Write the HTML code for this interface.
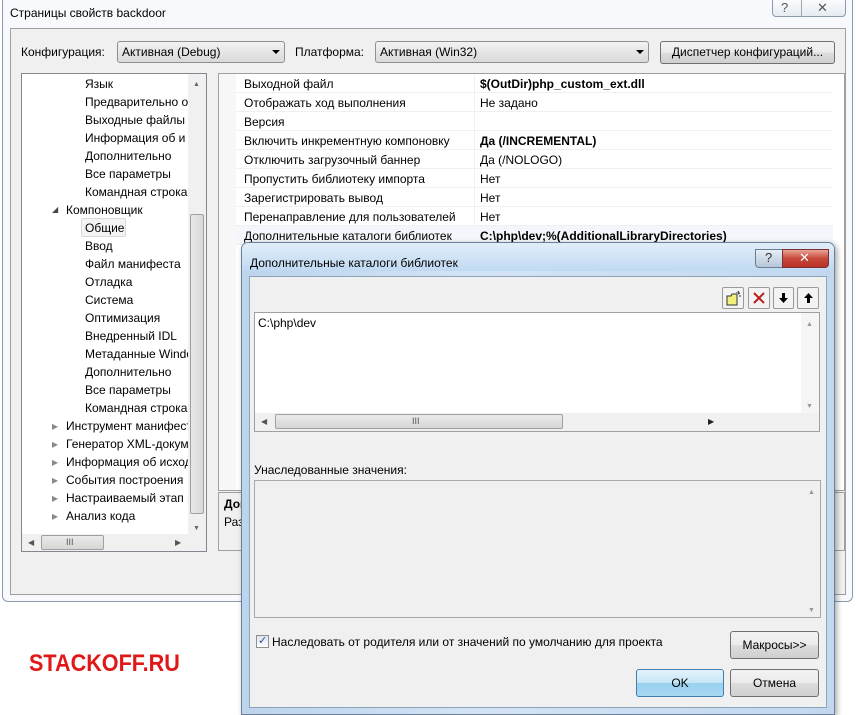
<!DOCTYPE html>
<html><head><meta charset="utf-8">
<style>
*{box-sizing:border-box;margin:0;padding:0}
body{width:856px;height:715px;background:#fff;position:relative;overflow:hidden;font-family:"Liberation Sans","DejaVu Sans",sans-serif;font-size:12px;color:#000}
.a{position:absolute}
.t{position:absolute;white-space:nowrap;line-height:14px}
.btn{position:absolute;border:1px solid #707070;border-radius:3px;background:linear-gradient(#f2f2f2 0%,#ebebeb 50%,#dddddd 51%,#cfcfcf 100%);text-align:center;font-size:12px}
.combo{position:absolute;border:1px solid #8e8f8f;border-radius:3px;background:linear-gradient(#f2f2f2,#e6e6e6 50%,#d9d9d9);}
.arrow{position:absolute;width:0;height:0;border-left:4px solid transparent;border-right:4px solid transparent;border-top:4px solid #000}
.row{position:absolute;left:236px;width:597px;height:19px;border-bottom:1px solid #f0f0f0}
</style></head><body>
<div class="a" style="left:2px;top:0;width:851px;height:602px;background:#f7f9fc;border:1px solid #8a9bb0;border-top:none;border-radius:0 0 6px 6px"></div>
<div class="t" style="left:10px;top:6px;font-size:12px">Страницы свойств backdoor</div>
<div class="a" style="left:772px;top:0;width:74px;height:17px;border:1px solid #8a9bb0;border-top:none;border-radius:0 0 4px 4px;background:linear-gradient(#fbfcfd,#e6ebf1)"></div>
<div class="a" style="left:801px;top:0;width:1px;height:17px;background:#9aa8b8"></div>
<div class="t" style="left:781px;top:1px;color:#555;font-size:13px">?</div>
<div class="t" style="left:817px;top:1px;color:#555;font-size:13px">✕</div>
<div class="a" style="left:10px;top:28px;width:836px;height:567px;background:#f0f0f0;border:1px solid #a0a0a0"></div>

<div class="t" style="left:21px;top:45px">Конфигурация:</div>
<div class="combo" style="left:117px;top:41px;width:168px;height:22px"></div>
<div class="t" style="left:122px;top:45px">Активная (Debug)</div>
<div class="arrow" style="left:272px;top:50px"></div>
<div class="t" style="left:295px;top:45px">Платформа:</div>
<div class="combo" style="left:375px;top:41px;width:274px;height:22px"></div>
<div class="t" style="left:380px;top:45px">Активная (Win32)</div>
<div class="arrow" style="left:636px;top:50px"></div>
<div class="btn" style="left:660px;top:41px;width:175px;height:23px;line-height:21px">Диспетчер конфигураций...</div>

<div class="a" style="left:21px;top:73px;width:186px;height:479px;background:#fff;border:1px solid #828790"></div>
<div class="a" style="left:22px;top:74px;width:166px;height:460px;overflow:hidden">
 <div class="t" style="left:63px;top:3px">Язык</div>
 <div class="t" style="left:63px;top:21px">Предварительно о</div>
 <div class="t" style="left:63px;top:39px">Выходные файлы</div>
 <div class="t" style="left:63px;top:57px">Информация об и</div>
 <div class="t" style="left:63px;top:75px">Дополнительно</div>
 <div class="t" style="left:63px;top:93px">Все параметры</div>
 <div class="t" style="left:63px;top:111px">Командная строка</div>
 <div class="t" style="left:30px;top:129px;font-size:8px;color:#444">◢</div>
 <div class="t" style="left:44px;top:129px">Компоновщик</div>
 <div class="a" style="left:59px;top:144px;width:45px;height:19px;border:1px solid #d9d9d9;border-radius:2px;background:#f3f3f3"></div>
 <div class="t" style="left:63px;top:147px">Общие</div>
 <div class="t" style="left:63px;top:165px">Ввод</div>
 <div class="t" style="left:63px;top:183px">Файл манифеста</div>
 <div class="t" style="left:63px;top:201px">Отладка</div>
 <div class="t" style="left:63px;top:219px">Система</div>
 <div class="t" style="left:63px;top:237px">Оптимизация</div>
 <div class="t" style="left:63px;top:255px">Внедренный IDL</div>
 <div class="t" style="left:63px;top:273px">Метаданные Windo</div>
 <div class="t" style="left:63px;top:291px">Дополнительно</div>
 <div class="t" style="left:63px;top:309px">Все параметры</div>
 <div class="t" style="left:63px;top:327px">Командная строка</div>
 <div class="t" style="left:30px;top:345px;color:#888">▸</div><div class="t" style="left:44px;top:345px">Инструмент манифест</div>
 <div class="t" style="left:30px;top:363px;color:#888">▸</div><div class="t" style="left:44px;top:363px">Генератор XML-докум</div>
 <div class="t" style="left:30px;top:381px;color:#888">▸</div><div class="t" style="left:44px;top:381px">Информация об исход</div>
 <div class="t" style="left:30px;top:399px;color:#888">▸</div><div class="t" style="left:44px;top:399px">События построения</div>
 <div class="t" style="left:30px;top:417px;color:#888">▸</div><div class="t" style="left:44px;top:417px">Настраиваемый этап п</div>
 <div class="t" style="left:30px;top:435px;color:#888">▸</div><div class="t" style="left:44px;top:435px">Анализ кода</div>
</div>
<div class="a" style="left:188px;top:74px;width:18px;height:460px;background:#f0f0f0"></div>
<div class="t" style="left:193px;top:78px;font-size:7px;color:#666">▲</div>
<div class="t" style="left:193px;top:522px;font-size:7px;color:#666">▼</div>
<div class="a" style="left:190px;top:214px;width:14px;height:300px;border:1px solid #a0a0a0;border-radius:2px;background:linear-gradient(90deg,#e8e8e8,#d8d8d8)"></div>
<div class="a" style="left:22px;top:534px;width:184px;height:17px;background:#f0f0f0"></div>
<div class="t" style="left:28px;top:536px;font-size:8px;color:#555">◀</div>
<div class="t" style="left:175px;top:536px;font-size:8px;color:#555">▶</div>
<div class="a" style="left:41px;top:535px;width:63px;height:15px;border:1px solid #a0a0a0;border-radius:2px;background:linear-gradient(#eaeaea,#d6d6d6)"></div>
<div class="t" style="left:66px;top:535px;font-size:9px;color:#555">III</div>

<div class="a" style="left:218px;top:73px;width:627px;height:418px;background:#fff;border:1px solid #a0a0a0"></div>
<div class="a" style="left:219px;top:74px;width:17px;height:416px;background:#f7f7f7"></div>
<div class="a" style="left:474px;top:74px;width:1px;height:170px;background:#f0f0f0"></div>
<div class="row" style="top:74px"></div><div class="t" style="left:244px;top:77px">Выходной файл</div><div class="t" style="left:480px;top:77px;font-weight:bold">$(OutDir)php_custom_ext.dll</div>
<div class="row" style="top:93px"></div><div class="t" style="left:244px;top:96px">Отображать ход выполнения</div><div class="t" style="left:480px;top:96px">Не задано</div>
<div class="row" style="top:112px"></div><div class="t" style="left:244px;top:115px">Версия</div>
<div class="row" style="top:131px"></div><div class="t" style="left:244px;top:134px">Включить инкрементную компоновку</div><div class="t" style="left:480px;top:134px;font-weight:bold">Да (/INCREMENTAL)</div>
<div class="row" style="top:150px"></div><div class="t" style="left:244px;top:153px">Отключить загрузочный баннер</div><div class="t" style="left:480px;top:153px">Да (/NOLOGO)</div>
<div class="row" style="top:169px"></div><div class="t" style="left:244px;top:172px">Пропустить библиотеку импорта</div><div class="t" style="left:480px;top:172px">Нет</div>
<div class="row" style="top:188px"></div><div class="t" style="left:244px;top:191px">Зарегистрировать вывод</div><div class="t" style="left:480px;top:191px">Нет</div>
<div class="row" style="top:207px"></div><div class="t" style="left:244px;top:210px">Перенаправление для пользователей</div><div class="t" style="left:480px;top:210px">Нет</div>
<div class="row" style="top:226px;background:#f3f6fa"></div><div class="t" style="left:244px;top:229px">Дополнительные каталоги библиотек</div><div class="t" style="left:480px;top:229px;font-weight:bold">C:\php\dev;%(AdditionalLibraryDirectories)</div>
<div class="a" style="left:218px;top:492px;width:627px;height:59px;border:1px solid #a0a0a0;background:#f0f0f0"></div>
<div class="t" style="left:224px;top:497px;font-weight:bold">Дополнительные</div>
<div class="t" style="left:224px;top:515px">Разделенный</div>

<div class="t" style="left:29px;top:650px;font-size:24px;line-height:28px;font-weight:bold;color:#e01818;transform:scaleX(0.9);transform-origin:left">STACKOFF.RU</div>

<div class="a" style="left:241px;top:242px;width:594px;height:473px;border:1px solid #6b7f96;border-radius:7px 7px 0 0;background:linear-gradient(90deg,#bcd4ec,#d3e3f4 40%,#c2d8ee);box-shadow:2px 2px 6px rgba(0,0,0,.35)"></div>
<div class="a" style="left:242px;top:243px;width:592px;height:28px;background:linear-gradient(#e2eef9,#c0d9f2);border-radius:6px 6px 0 0"></div>
<div class="t" style="left:250px;top:256px">Дополнительные каталоги библиотек</div>
<div class="a" style="left:755px;top:249px;width:28px;height:19px;border:1px solid #6d7d90;border-radius:0 0 0 4px;background:linear-gradient(#e6eef7,#b6c6d8)"></div>
<div class="t" style="left:765px;top:251px;color:#333;font-size:13px">?</div>
<div class="a" style="left:782px;top:249px;width:47px;height:19px;border:1px solid #7a3030;border-radius:0 0 4px 0;background:linear-gradient(#e8a494,#c8483a 50%,#b83226)"></div>
<div class="t" style="left:799px;top:251px;color:#fff;font-weight:bold;font-size:13px">✕</div>
<div class="a" style="left:249px;top:276px;width:578px;height:432px;background:#f0f0f0;border:1px solid #8ea4bd"></div>

<div class="a" style="left:722px;top:287px;width:22px;height:22px;border:1px solid #9a9a9a;border-radius:2px;background:#f3f3f3"></div>
<svg class="a" style="left:725px;top:290px" width="17" height="17" viewBox="0 0 17 17"><path d="M2 6h4l1-2h5v11H2z" fill="#f2f07a" stroke="#333"/><path d="M13 1l1 2M15 3l-2 1M16 6h-2M12 2v1" stroke="#333"/></svg>
<div class="a" style="left:748px;top:287px;width:22px;height:22px;border:1px solid #9a9a9a;border-radius:2px;background:#f3f3f3"></div>
<svg class="a" style="left:752px;top:291px" width="14" height="14"><path d="M2 2L12 12M12 2L2 12" stroke="#b81c1c" stroke-width="2"/></svg>
<div class="a" style="left:773px;top:287px;width:21px;height:22px;border:1px solid #9a9a9a;border-radius:2px;background:#f3f3f3"></div>
<svg class="a" style="left:778px;top:292px" width="11" height="12"><path d="M4 1h3v5h3L5.5 11 1 6h3z" fill="#000"/></svg>
<div class="a" style="left:797px;top:287px;width:22px;height:22px;border:1px solid #9a9a9a;border-radius:2px;background:#f3f3f3"></div>
<svg class="a" style="left:803px;top:292px" width="11" height="12"><path d="M4 11h3V6h3L5.5 1 1 6h3z" fill="#000"/></svg>

<div class="a" style="left:254px;top:312px;width:566px;height:120px;background:#fff;border:1px solid #a0a0a0"></div>
<div class="t" style="left:258px;top:316px">C:\php\dev</div>
<div class="a" style="left:801px;top:313px;width:18px;height:101px;background:#f5f5f5"></div>
<div class="t" style="left:806px;top:318px;font-size:7px;color:#999">▲</div>
<div class="t" style="left:806px;top:400px;font-size:7px;color:#999">▼</div>
<div class="a" style="left:255px;top:413px;width:564px;height:18px;background:#f0f0f0"></div>
<div class="a" style="left:275px;top:414px;width:288px;height:15px;border:1px solid #a0a0a0;border-radius:2px;background:linear-gradient(#eaeaea,#d6d6d6)"></div>
<div class="t" style="left:412px;top:414px;font-size:9px;color:#555">III</div>
<div class="t" style="left:261px;top:415px;font-size:8px;color:#555">◀</div>
<div class="t" style="left:708px;top:415px;font-size:8px;color:#222">▶</div>

<div class="t" style="left:254px;top:463px">Унаследованные значения:</div>
<div class="a" style="left:254px;top:480px;width:567px;height:138px;background:#f0f0f0;border:1px solid #a8a8a8"></div>
<div class="t" style="left:808px;top:486px;font-size:7px;color:#999">▲</div>
<div class="t" style="left:808px;top:604px;font-size:7px;color:#999">▼</div>

<div class="a" style="left:256px;top:635px;width:13px;height:13px;border:1px solid #8e8f8f;background:linear-gradient(#dde4ee,#fff)"></div>
<div class="t" style="left:258px;top:634px;color:#2a4f8a;font-size:11px;font-weight:bold">✓</div>
<div class="t" style="left:272px;top:635px">Наследовать от родителя или от значений по умолчанию для проекта</div>

<div class="btn" style="left:730px;top:631px;width:89px;height:28px;line-height:26px">Макросы&gt;&gt;</div>
<div class="btn" style="left:636px;top:669px;width:88px;height:28px;line-height:26px;border-color:#3c7fb1;background:linear-gradient(#e5f4fc 0%,#c4e5f6 50%,#98d1ef 51%,#a7d8f0 100%)">OK</div>
<div class="btn" style="left:730px;top:669px;width:89px;height:28px;line-height:26px">Отмена</div>
</body></html>
